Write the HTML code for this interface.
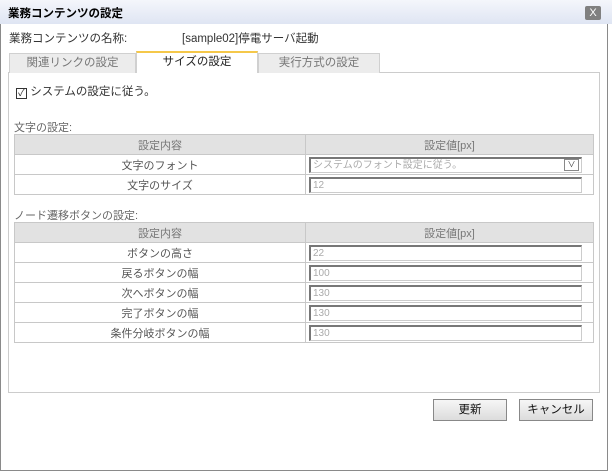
<!DOCTYPE html>
<html><head><meta charset="utf-8"><style>
*{box-sizing:border-box;margin:0;padding:0}
body{width:612px;height:472px;background:#fff;font-family:"Liberation Sans","Noto Sans CJK JP",sans-serif;font-size:11.5px;color:#333;position:relative;overflow:hidden}
.win{position:absolute;left:0;top:0;width:608px;height:471px;border:1px solid #8a8a8a;border-top:none}
.title{position:absolute;left:0;top:0;width:612px;height:24px;background:linear-gradient(#f4f6fb,#dfe5f3);font-weight:bold;font-size:11.5px;padding:5px 0 0 8px;color:#000}
.close{position:absolute;left:585px;top:6px;width:16px;height:14px;background:#808080;border-radius:2px;color:#fff;font-size:11px;text-align:center;line-height:14px}
.abs{position:absolute}
.tab{position:absolute;top:53px;height:20px;background:#ececec;border:1px solid #d0d0d0;border-bottom:none;text-align:center;line-height:19px;color:#777}
.tab.on{background:#fff;color:#222;border-top:2px solid #f5c84a;top:51px;height:22px}
.panel{position:absolute;left:8px;top:72px;width:592px;height:321px;border:1px solid #ccc}
table{position:absolute;left:14px;width:580px;border-collapse:collapse}
td{border:1px solid #c8c8c8;height:20px;font-size:11px;color:#555;text-align:center;padding:0}
tr.h td{background:#e2e2e2;color:#777}
td.v{text-align:left;padding-left:3px}
.inp{width:273px;height:16px;border:1px solid #ccc;border-top:2px solid #777;border-left:2px solid #777;color:#aaa;font-size:10px;line-height:13px;padding-left:2px;position:relative}
.dd{position:absolute;right:2px;top:0;width:15px;height:12px;border:1px solid #888;font-size:8px;line-height:10px;text-align:center;color:#333}
.btn{position:absolute;top:399px;width:74px;height:22px;background:linear-gradient(#f6f6f6,#dcdcdc);border:1px solid #888;text-align:center;line-height:20px;color:#111}
.lbl{color:#666;font-size:11px}
</style></head><body>
<div class="win"></div>
<div class="title">業務コンテンツの設定</div>
<div class="close">X</div>
<div class="abs" style="left:9px;top:30px">業務コンテンツの名称:</div>
<div class="abs" style="left:182px;top:30px">[sample02]停電サーバ起動</div>
<div class="panel"></div>
<div class="tab" style="left:9px;width:127px">関連リンクの設定</div>
<div class="tab on" style="left:136px;width:122px">サイズの設定</div>
<div class="tab" style="left:258px;width:122px">実行方式の設定</div>
<div class="abs" style="left:16px;top:83px;"><span style="display:inline-block;width:11px;height:11px;border:1px solid #333;font-size:10px;line-height:9px;text-align:center;vertical-align:-1px">✓</span> システムの設定に従う。</div>
<div class="abs lbl" style="left:14px;top:119px">文字の設定:</div>
<table style="top:134px">
<tr class="h"><td style="width:291px">設定内容</td><td>設定値[px]</td></tr>
<tr><td>文字のフォント</td><td class="v"><div class="inp">システムのフォント設定に従う。<div class="dd">∨</div></div></td></tr>
<tr><td>文字のサイズ</td><td class="v"><div class="inp">12</div></td></tr>
</table>
<div class="abs lbl" style="left:14px;top:207px">ノード遷移ボタンの設定:</div>
<table style="top:222px">
<tr class="h"><td style="width:291px">設定内容</td><td>設定値[px]</td></tr>
<tr><td>ボタンの高さ</td><td class="v"><div class="inp">22</div></td></tr>
<tr><td>戻るボタンの幅</td><td class="v"><div class="inp">100</div></td></tr>
<tr><td>次へボタンの幅</td><td class="v"><div class="inp">130</div></td></tr>
<tr><td>完了ボタンの幅</td><td class="v"><div class="inp">130</div></td></tr>
<tr><td>条件分岐ボタンの幅</td><td class="v"><div class="inp">130</div></td></tr>
</table>
<div class="btn" style="left:433px">更新</div>
<div class="btn" style="left:519px">キャンセル</div>
</body></html>
